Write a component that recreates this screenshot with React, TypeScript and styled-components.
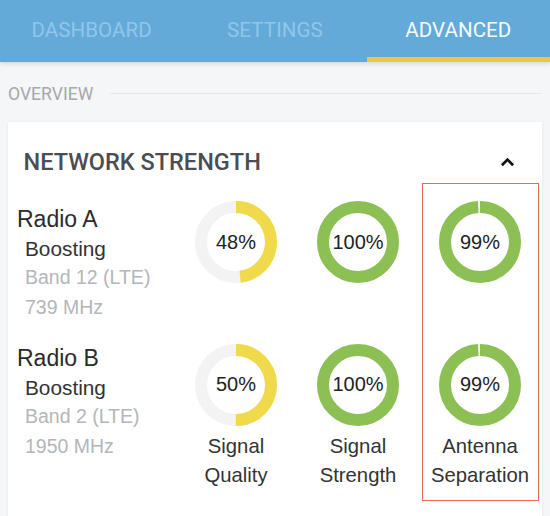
import React from "react";
import styled, { createGlobalStyle } from "styled-components";

const GlobalStyle = createGlobalStyle`
  html, body { margin: 0; padding: 0; }
  body {
    background: #f5f6f8;
    font-family: "Liberation Sans", Arial, sans-serif;
    overflow: hidden;
  }
  * { box-sizing: border-box; }
`;

const Page = styled.div`
  width: 550px;
  height: 516px;
  overflow: hidden;
  background: #f5f6f8;
`;

const TabBar = styled.div`
  display: grid;
  grid-template-columns: repeat(3, 1fr);
  height: 62px;
  background: #63aad9;
  box-shadow: 0 2px 4px rgba(0, 0, 0, 0.12);
  position: relative;
  z-index: 1;
`;

const Tab = styled.div<{ $active?: boolean }>`
  display: flex;
  align-items: center;
  justify-content: center;
  padding-bottom: 2px;
  font-family: Roboto, "Liberation Sans", sans-serif;
  font-size: 20.5px;
  letter-spacing: 0.1px;
  color: ${(p) => (p.$active ? "#f6fafd" : "#90c6ea")};
  box-shadow: ${(p) => (p.$active ? "inset 0 -5px 0 #f2c24c" : "none")};
`;

const Overview = styled.div`
  display: flex;
  align-items: center;
  gap: 17px;
  margin: 21.7px 8px 18.3px 8px;
  height: 20px;
`;

const OverviewLabel = styled.span`
  font-family: Roboto, "Liberation Sans", sans-serif;
  font-size: 17.6px;
  line-height: 20px;
  color: #a6a8ab;
`;

const Rule = styled.div`
  flex: 1;
  height: 1px;
  background: #e6e7ea;
`;

const Card = styled.div`
  margin: 0 8.3px 0 8px;
  background: #ffffff;
  box-shadow: 0 1px 3px rgba(0, 0, 0, 0.08);
  padding-bottom: 30px;
`;

const CardHeader = styled.div`
  display: flex;
  align-items: center;
  justify-content: space-between;
  padding: 27.5px 26.7px 7.8px 15.5px;
`;

const CardTitle = styled.h2`
  margin: 0;
  font-family: Roboto, "Liberation Sans", sans-serif;
  font-weight: 500;
  font-size: 23.5px;
  line-height: 26px;
  color: #4a4d52;
`;

const Chevron = styled.svg`
  display: block;
  width: 15px;
  height: 10px;
`;

const Body = styled.div`
  display: flex;
  align-items: flex-start;
  gap: 5px;
  padding-left: 9px;
`;

const InfoColumn = styled.div`
  flex: 0 0 155.5px;
  display: flex;
  flex-direction: column;
  gap: 20.5px;
  padding-top: 20.7px;
`;

const RadioBlock = styled.div`
  display: flex;
  flex-direction: column;
`;

const RadioName = styled.div`
  font-size: 23px;
  line-height: 30px;
  color: #2b2b2b;
`;

const RadioLine = styled.div<{ $muted?: boolean }>`
  font-size: ${(p) => (p.$muted ? "19.5px" : "20.8px")};
  line-height: 29.5px;
  padding-left: 8px;
  white-space: nowrap;
  color: ${(p) => (p.$muted ? "#b4b6b9" : "#333333")};
`;

const MetricColumn = styled.div<{ $highlight?: boolean }>`
  flex: 0 0 117px;
  display: flex;
  flex-direction: column;
  align-items: center;
  gap: 60.5px;
  border: 1.5px solid ${(p) => (p.$highlight ? "#e6685e" : "transparent")};
  padding: 16.9px 0 10px;
`;

const DonutWrap = styled.div`
  position: relative;
  width: 82px;
  height: 82px;
`;

const DonutSvg = styled.svg`
  display: block;
  width: 82px;
  height: 82px;
`;

const DonutValue = styled.span`
  position: absolute;
  inset: 0;
  display: flex;
  align-items: center;
  justify-content: center;
  font-size: 20px;
  color: #222222;
`;

const MetricLabel = styled.div`
  margin-top: -54.5px;
  font-size: 20.3px;
  line-height: 29px;
  text-align: center;
  color: #333333;
`;

const R = 35;
const C = 2 * Math.PI * R;

function Donut({ value, color }: { value: number; color: string }) {
  const len = (C * value) / 100;
  return (
    <DonutWrap>
      <DonutSvg viewBox="0 0 82 82">
        <circle cx="41" cy="41" r={R} fill="none" stroke="#f3f3f4" strokeWidth="12" />
        <circle
          cx="41"
          cy="41"
          r={R}
          fill="none"
          stroke={color}
          strokeWidth="12"
          strokeDasharray={`${len} ${C}`}
          transform="rotate(-90 41 41)"
        />
      </DonutSvg>
      <DonutValue>{value}%</DonutValue>
    </DonutWrap>
  );
}

const YELLOW = "#f0d94b";
const GREEN = "#8cc055";

const radios = [
  { name: "Radio A", band: "Band 12 (LTE)", freq: "739 MHz" },
  { name: "Radio B", band: "Band 2 (LTE)", freq: "1950 MHz" },
];

const metrics = [
  { label: ["Signal", "Quality"], values: [48, 50], color: YELLOW, highlight: false },
  { label: ["Signal", "Strength"], values: [100, 100], color: GREEN, highlight: false },
  { label: ["Antenna", "Separation"], values: [99, 99], color: GREEN, highlight: true },
];

export default function App() {
  return (
    <Page>
      <GlobalStyle />
      <TabBar>
        <Tab>DASHBOARD</Tab>
        <Tab>SETTINGS</Tab>
        <Tab $active>ADVANCED</Tab>
      </TabBar>
      <Overview>
        <OverviewLabel>OVERVIEW</OverviewLabel>
        <Rule />
      </Overview>
      <Card>
        <CardHeader>
          <CardTitle>NETWORK STRENGTH</CardTitle>
          <Chevron viewBox="0 0 15 10">
            <path d="M1.9 8.2 L7.5 2.6 L13.1 8.2" fill="none" stroke="#111" strokeWidth="2.7" />
          </Chevron>
        </CardHeader>
        <Body>
          <InfoColumn>
            {radios.map((r) => (
              <RadioBlock key={r.name}>
                <RadioName>{r.name}</RadioName>
                <RadioLine>Boosting</RadioLine>
                <RadioLine $muted>{r.band}</RadioLine>
                <RadioLine $muted>{r.freq}</RadioLine>
              </RadioBlock>
            ))}
          </InfoColumn>
          {metrics.map((m) => (
            <MetricColumn key={m.label.join(" ")} $highlight={m.highlight}>
              {m.values.map((v, i) => (
                <Donut key={i} value={v} color={m.color} />
              ))}
              <MetricLabel>
                {m.label[0]}
                <br />
                {m.label[1]}
              </MetricLabel>
            </MetricColumn>
          ))}
        </Body>
      </Card>
    </Page>
  );
}
